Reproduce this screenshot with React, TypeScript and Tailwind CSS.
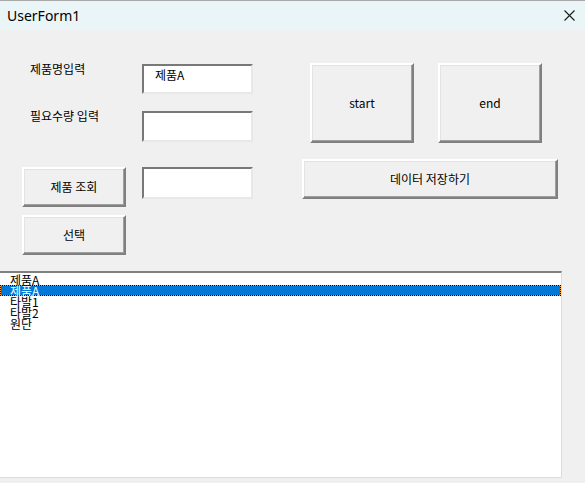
import React from "react";

const ko = { fontFamily: '"Noto Sans CJK KR", "Noto Sans", sans-serif' };

function RaisedButton({ label, className }: { label: string; className: string }) {
  return (
    <button
      className={`flex items-center justify-center bg-[#f0f0f0] border-2 border-t-white border-l-white border-b-[#808080] border-r-[#808080] shadow-[inset_-1px_-1px_0_#a0a0a0,inset_1px_1px_0_#e3e3e3] text-[12px] text-black ${className}`}
      style={ko}
    >
      {label}
    </button>
  );
}

function TextBox({ value, className }: { value?: string; className: string }) {
  return (
    <div
      className={`bg-white border-2 border-t-[#787878] border-l-[#787878] border-b-[#e8e8e8] border-r-[#e8e8e8] pl-[11px] pt-[1px] text-[12px] leading-[16px] text-black ${className}`}
      style={ko}
    >
      {value}
    </div>
  );
}

const items = ["제품A", "제품A", "타발1", "타발2", "원단"];

export default function App() {
  return (
    <div className="w-[585px] h-[483px] bg-[#f0f0f0] overflow-hidden flex flex-col">
      <div className="h-[30px] shrink-0 bg-[#eaf5f8] border-t border-[#a8a8a8] flex items-center justify-between pl-[7px] pr-[10px]">
        <span className="text-[14px] text-black" style={{ fontFamily: '"Noto Sans", sans-serif' }}>
          UserForm1
        </span>
        <svg width="11" height="11" viewBox="0 0 11 11">
          <path d="M0.5 0.5 L10.5 10.5 M10.5 0.5 L0.5 10.5" stroke="#1a1a1a" strokeWidth="1.1" />
        </svg>
      </div>

      <div className="flex pt-[33px]">
        <div className="ml-[22px] w-[231px] flex flex-col">
          <div className="flex mt-[1px]">
            <div className="w-[120px] pl-[8px] text-[12px] leading-[14px] -mt-[2px] text-black" style={ko}>
              제품명입력
            </div>
            <TextBox value="제품A" className="w-[111px] h-[30px]" />
          </div>
          <div className="flex mt-[17px]">
            <div className="w-[120px] pl-[8px] text-[12px] leading-[14px] -mt-[2px] text-black" style={ko}>
              필요수량 입력
            </div>
            <TextBox className="w-[111px] h-[31px]" />
          </div>
          <div className="flex mt-[25px]">
            <RaisedButton label="제품 조회" className="w-[104px] h-[40px]" />
            <TextBox className="ml-[16px] w-[111px] h-[32px]" />
          </div>
          <RaisedButton label="선택" className="mt-[8px] w-[104px] h-[40px]" />
        </div>

        <div className="ml-[49px] w-[256px] flex flex-col">
          <div className="flex pl-[8px] gap-[24px]">
            <RaisedButton label="start" className="w-[104px] h-[80px]" />
            <RaisedButton label="end" className="w-[104px] h-[80px]" />
          </div>
          <RaisedButton label="데이터 저장하기" className="mt-[16px] w-[256px] h-[40px]" />
        </div>
      </div>

      <div className="mt-[16px] w-[562px] h-[207px] bg-white border-t-2 border-t-[#808080] border-r border-b border-r-[#dcdcdc] border-b-[#dcdcdc] pt-[1px]">
        {items.map((item, i) =>
          i === 1 ? (
            <div key={i} className="h-[11px] bg-[#ff9d2e] border border-dotted border-black">
              <div className="h-full bg-[#0078d7] pl-[9px] text-[12px] leading-[9px] text-white" style={ko}>
                {item}
              </div>
            </div>
          ) : (
            <div key={i} className="h-[11px] pl-[10px] text-[12px] leading-[11px] text-black" style={ko}>
              {item}
            </div>
          )
        )}
      </div>
    </div>
  );
}
